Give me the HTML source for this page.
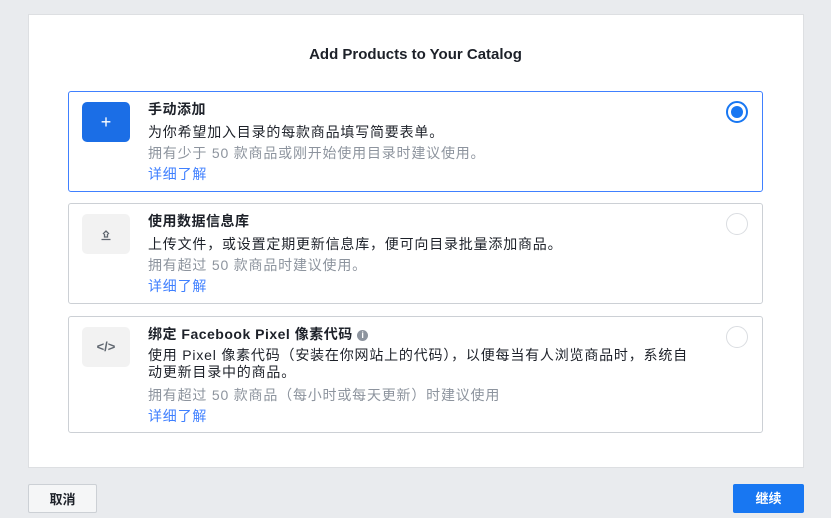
<!DOCTYPE html>
<html><head><meta charset="utf-8"><style>
body{margin:0;width:831px;height:518px;background:#e9ebee;font-family:"Liberation Sans","Noto Sans CJK SC",sans-serif;position:relative;overflow:hidden}
.card{position:absolute;left:28px;top:14px;width:776px;height:454px;background:#fff;border:1px solid #dddfe2;box-sizing:border-box}
h1{position:absolute;left:0;right:0;top:46px;margin:0;text-align:center;font-size:15px;font-weight:bold;color:#1d2129}
.opt{position:absolute;left:68px;width:695px;box-sizing:border-box;border:1px solid #ccd0d5;border-radius:3px;background:#fff}
.opt.sel{border-color:#4080ff}
.ic{position:absolute;left:13px;top:10px;width:48px;height:40px;border-radius:5px;background:#f2f2f2;color:#606770;font-size:13px;text-align:center;line-height:40px}
.sel .ic{background:#1b6ee6;color:#fff;font-size:18px}
.tx{position:absolute;left:79px;top:7px;right:40px;font-size:14px;letter-spacing:0.8px;line-height:21px;color:#1d2129}
.t{font-weight:bold;margin-bottom:2px;letter-spacing:0.5px}
.g{color:#8d949e}
.l{color:#4080ff}
.r{position:absolute;right:14px;top:9px;width:22px;height:22px;border-radius:50%;border:1px solid #dadde1;box-sizing:border-box}
.sel .r{border:2px solid #1877f2}
.sel .r:after{content:"";position:absolute;left:3px;top:3px;width:12px;height:12px;border-radius:50%;background:#1877f2}
.btn{position:absolute;top:484px;height:29px;border-radius:2px;font-size:13px;font-weight:bold;line-height:29px;text-align:center;box-sizing:border-box}
</style></head><body>
<div class="card"></div>
<h1>Add Products to Your Catalog</h1>
<div class="opt sel" style="top:91px;height:101px"><div class="ic">+</div><div class="tx"><div class="t">手动添加</div><div>为你希望加入目录的每款商品填写简要表单。</div><div class="g">拥有少于 50 款商品或刚开始使用目录时建议使用。</div><div class="l">详细了解</div></div><div class="r"></div></div>
<div class="opt" style="top:203px;height:101px"><div class="ic"><svg width="14" height="14" viewBox="0 0 14 14" style="vertical-align:middle"><path d="M4 6L7 3L10 6M5.5 6V9H8.5V6M2.5 11.5H11.5" fill="none" stroke="#606770" stroke-width="1.3"/></svg></div><div class="tx"><div class="t">使用数据信息库</div><div>上传文件，或设置定期更新信息库，便可向目录批量添加商品。</div><div class="g">拥有超过 50 款商品时建议使用。</div><div class="l">详细了解</div></div><div class="r"></div></div>
<div class="opt" style="top:316px;height:117px"><div class="ic" style="font-weight:bold">&lt;/&gt;</div><div class="tx"><div class="t">绑定 Facebook Pixel 像素代码 <span style="display:inline-block;width:11px;height:11px;border-radius:50%;background:#8d949e;color:#fff;font-size:9px;line-height:11px;text-align:center;vertical-align:1px;letter-spacing:0">i</span></div><div style="line-height:17px;margin:2px 0 4px;white-space:nowrap">使用 Pixel 像素代码（安装在你网站上的代码），以便每当有人浏览商品时，系统自<br>动更新目录中的商品。</div><div class="g">拥有超过 50 款商品（每小时或每天更新）时建议使用</div><div class="l">详细了解</div></div><div class="r"></div></div>
<div class="btn" style="left:28px;width:69px;background:#f5f6f7;border:1px solid #ccd0d5;color:#1d2129">取消</div>
<div class="btn" style="left:733px;width:71px;background:#1877f2;color:#fff">继续</div>
</body></html>
